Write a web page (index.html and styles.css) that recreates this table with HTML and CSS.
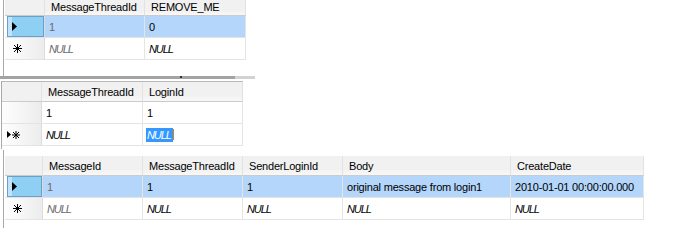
FILE: index.html
```html
<!DOCTYPE html>
<html>
<head>
<meta charset="utf-8">
<link rel="stylesheet" href="styles.css">
</head>
<body>
<div class="pane pane1">
  <div class="grid g1">
    <div class="row head">
      <div class="cell rh"></div>
      <div class="cell c100">MessageThreadId</div>
      <div class="cell c101">REMOVE_ME</div>
    </div>
    <div class="row sel">
      <div class="cell rh"><div class="rhsel"><svg class="tri" width="5" height="9" viewBox="0 0 5 9"><polygon points="0,0 5,4.5 0,9" fill="#000"/></svg></div></div>
      <div class="cell c100 ro">1</div>
      <div class="cell c101">0</div>
    </div>
    <div class="row">
      <div class="cell rh"><svg class="star" width="9" height="9" viewBox="0 0 9 9"><path d="M4.5 0V9M0 4.5H9M1 1L8 8M8 1L1 8" stroke="#000" stroke-width="1"/></svg></div>
      <div class="cell c100 ro null">NULL</div>
      <div class="cell c101 null">NULL</div>
    </div>
  </div>
</div>
<div class="splitter"><span class="mark"></span></div>
<div class="pane pane2">
  <div class="grid g2">
    <div class="row head">
      <div class="cell rh"></div>
      <div class="cell c101">MessageThreadId</div>
      <div class="cell c100">LoginId</div>
    </div>
    <div class="row">
      <div class="cell rh"></div>
      <div class="cell c101">1</div>
      <div class="cell c100">1</div>
    </div>
    <div class="row">
      <div class="cell rh"><svg class="tri-s" width="4" height="7" viewBox="0 0 4 7"><polygon points="0,0 4,3.5 0,7" fill="#000"/></svg><svg class="star" width="8" height="8" viewBox="0 0 8 8"><path d="M4 0V8M0 4H8M1 1L7 7M7 1L1 7" stroke="#000" stroke-width="1"/></svg></div>
      <div class="cell c101 null">NULL</div>
      <div class="cell c100"><span class="null hl">NULL</span><span class="caret"></span></div>
    </div>
  </div>
</div>
<div class="pane pane3">
  <div class="grid g3">
    <div class="row head">
      <div class="cell rh"></div>
      <div class="cell c100">MessageId</div>
      <div class="cell c100">MessageThreadId</div>
      <div class="cell c100">SenderLoginId</div>
      <div class="cell c168">Body</div>
      <div class="cell c133">CreateDate</div>
    </div>
    <div class="row sel">
      <div class="cell rh"><div class="rhsel"><svg class="tri" width="5" height="9" viewBox="0 0 5 9"><polygon points="0,0 5,4.5 0,9" fill="#000"/></svg></div></div>
      <div class="cell c100 ro">1</div>
      <div class="cell c100">1</div>
      <div class="cell c100">1</div>
      <div class="cell c168">original message from login1</div>
      <div class="cell c133">2010-01-01 00:00:00.000</div>
    </div>
    <div class="row">
      <div class="cell rh"><svg class="star" width="9" height="9" viewBox="0 0 9 9"><path d="M4.5 0V9M0 4.5H9M1 1L8 8M8 1L1 8" stroke="#000" stroke-width="1"/></svg></div>
      <div class="cell c100 ro null">NULL</div>
      <div class="cell c100 null">NULL</div>
      <div class="cell c100 null">NULL</div>
      <div class="cell c168 null">NULL</div>
      <div class="cell c133 null">NULL</div>
    </div>
  </div>
</div>
</body>
</html>
```

FILE: styles.css
```css
html, body {
  margin: 0;
  padding: 0;
  background: #ffffff;
}
body {
  width: 676px;
  height: 248px;
  overflow: hidden;
  font-family: "Liberation Sans", Arial, sans-serif;
  font-size: 11px;
  letter-spacing: -0.2px;
  color: #000;
}
.pane {
  box-sizing: border-box;
}
.pane1 {
  height: 76px;
  margin-left: 3px;
  border-left: 1px solid #a9a9a9;
  padding-left: 1px;
}
.splitter {
  width: 255px;
  height: 3px;
  background: linear-gradient(to right, #a3a3a3 0, #a3a3a3 235px, #d2d2d2 235px, #d2d2d2 255px);
  display: flex;
}
.mark {
  width: 2px;
  height: 2px;
  margin-left: 180px;
  background: #333;
}
.pane2 {
  height: 68px;
  margin-top: 2px;
  margin-left: 1px;
  border-left: 1px solid #a9a9a9;
}
.pane3 {
  height: 78px;
  margin-top: 1px;
  margin-left: 3px;
  border-left: 1px solid #a9a9a9;
  padding-left: 1px;
  padding-top: 6px;
}
.grid {
  display: flex;
  flex-direction: column;
}
.g2 {
  border-top: 1px solid #b9b9b9;
  width: 241px;
}
.row {
  display: flex;
  height: 22px;
}
.cell {
  box-sizing: border-box;
  height: 100%;
  border-right: 1px solid #e4e4e4;
  border-bottom: 1px solid #e4e4e4;
  padding-left: 4px;
  display: flex;
  align-items: center;
  white-space: nowrap;
  overflow: hidden;
}
.head {
  height: 20px;
}
.g1 .head {
  height: 16px;
}
.head .cell {
  background: linear-gradient(#f1f1f1, #f1f1f1 70%, #f8f8f8);
  border-bottom: 1px solid #cbcbcb;
  border-right: 1px solid #e2e2e2;
  padding-left: 6px;
  padding-top: 1px;
}
.g1 .head .cell {
  padding-top: 0;
  padding-bottom: 1px;
}
.rh {
  width: 40px;
  padding-left: 0;
  background: linear-gradient(to right, #fdfdfd 0, #f9f9f9 30%, #ececec 100%);
  border-right: 1px solid #dcdcdc;
}
.g3 .rh {
  width: 38px;
}
.head .rh {
  background: #f1f1f1;
}
.c100 { width: 100px; }
.c101 { width: 101px; }
.c168 { width: 168px; }
.c133 { width: 133px; }
.sel .cell {
  background: #b4d6fb;
}
.sel .cell.rh {
  background: #fff;
}
.rhsel {
  box-sizing: border-box;
  margin: 0 0 0 2px;
  width: 37px;
  height: 21px;
  background: #8ed0f4;
  border: 1px solid #6b9fc6;
  box-shadow: inset 4px 0 #bfe4f9;
  display: flex;
  align-items: center;
  padding-left: 4px;
}
.g3 .rhsel {
  width: 36px;
}
.tri {
  display: block;
}
.rh > .star {
  margin-left: 8px;
}
.tri-s {
  margin-left: 5px;
  margin-right: 1px;
}
.g2 .rh > .star {
  margin-left: 0;
}
.ro {
  color: #6a6a6a;
}
.null {
  font-style: italic;
  letter-spacing: -1.1px;
}
.hl {
  background: #3399ff;
  color: #fff;
  padding: 1px 2px 1px 1px;
  margin-left: -1px;
}
.caret {
  width: 1px;
  height: 11px;
  background: #e07a1f;
}
```
